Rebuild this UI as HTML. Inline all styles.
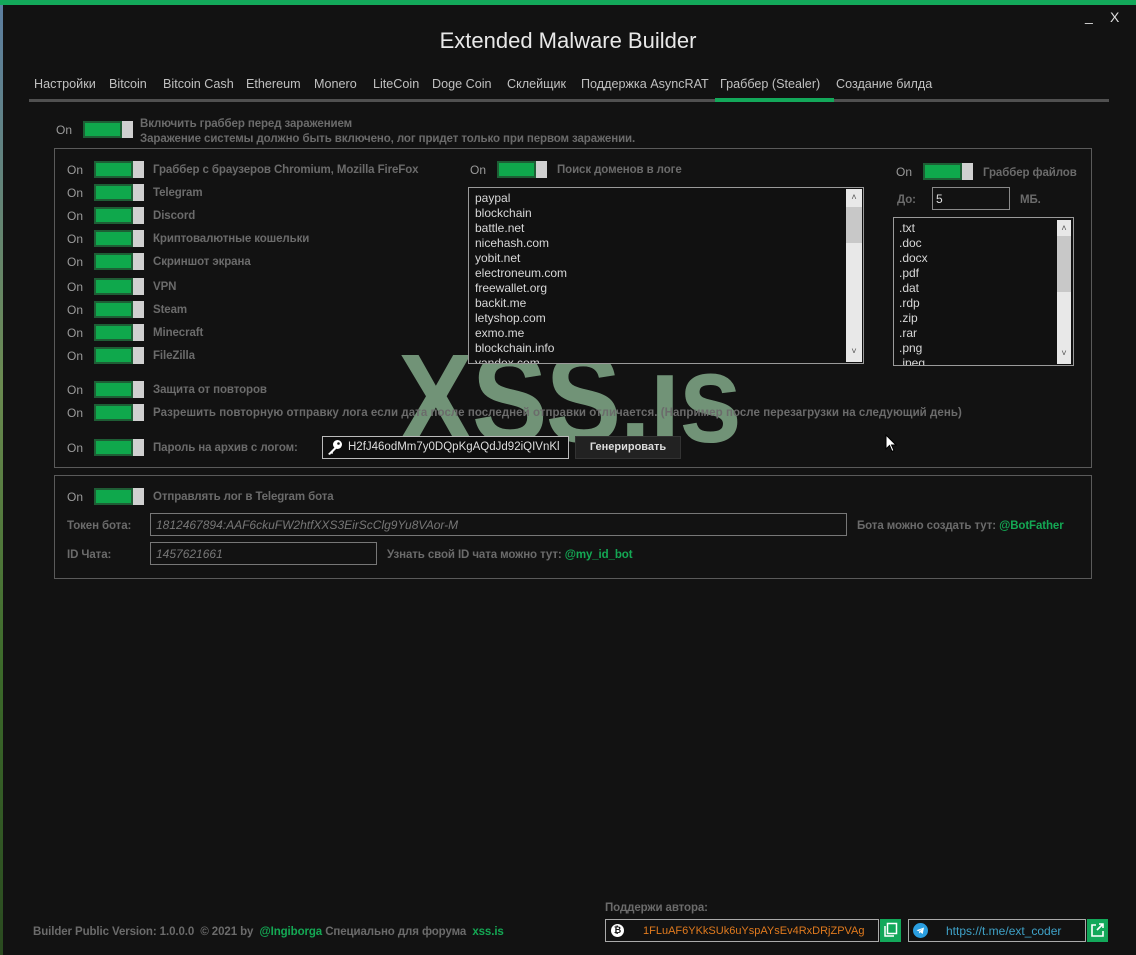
<!DOCTYPE html>
<html><head><meta charset="utf-8"><style>
*{margin:0;padding:0;box-sizing:border-box}
body{width:1136px;height:955px;background:#121212;overflow:hidden;position:relative;font-family:"Liberation Sans",sans-serif;color:#6c6c6c}
.a{position:absolute;white-space:nowrap}
.on{font-size:12px;color:#9a9a9a}
.lb{font-size:11.5px;font-weight:bold;color:#6b6b6b;letter-spacing:-0.1px;margin-top:2px}
.tg{position:absolute;width:50px;height:17px;background:#d0d0d0}
.tg:before{content:"";position:absolute;left:0;top:0;width:39px;height:17px;background:#0fa84c;border:2px solid #1e5e35;box-sizing:border-box}
.box{position:absolute;border:1px solid #5a5a5a}
.list{position:absolute;border:1px solid #9a9a9a;background:#111;overflow:hidden;font-size:12px;color:#d8d8d8;line-height:15px}
.sb{position:absolute;right:1px;top:1px;bottom:1px;width:16px;background:#e8e8e8}
.tab{font-size:12.6px;color:#c0c0c0;top:77px}
</style></head><body>
<div class="a" style="left:0;top:0;width:1136px;height:5px;background:#13a85a"></div>
<div class="a" style="left:0;top:5px;width:3px;height:950px;background:linear-gradient(#5c7ea0,#6a8a50 40%,#3c6a2a 70%,#2a4a20)"></div>
<div class="a" style="left:0;top:28px;width:1136px;text-align:center;font-size:22px;color:#e8e8e8">Extended Malware Builder</div>
<div class="a" style="left:1085px;top:8px;font-size:14px;color:#ddd">_</div>
<div class="a" style="left:1110px;top:9px;font-size:14px;color:#ddd">X</div>
<div class="a tab" style="left:34px">Настройки</div>
<div class="a tab" style="left:109px">Bitcoin</div>
<div class="a tab" style="left:163px">Bitcoin Cash</div>
<div class="a tab" style="left:246px">Ethereum</div>
<div class="a tab" style="left:314px">Monero</div>
<div class="a tab" style="left:373px">LiteCoin</div>
<div class="a tab" style="left:432px">Doge Coin</div>
<div class="a tab" style="left:507px">Склейщик</div>
<div class="a tab" style="left:581px">Поддержка AsyncRAT</div>
<div class="a tab" style="left:720px">Граббер (Stealer)</div>
<div class="a tab" style="left:836px">Создание билда</div>
<div class="a" style="left:29px;top:99px;width:1080px;height:3px;background:#505050"></div>
<div class="a" style="left:715px;top:98px;width:119px;height:4px;background:#13a85a"></div>

<div class="a on" style="left:56px;top:123px">On</div>
<div class="tg" style="left:83px;top:121px"></div>
<div class="a lb" style="left:140px;top:116px">Включить граббер перед заражением</div>
<div class="a lb" style="left:140px;top:131px">Заражение системы должно быть включено, лог придет только при первом заражении.</div>

<div class="box" style="left:54px;top:148px;width:1038px;height:320px"></div>
<div class="box" style="left:54px;top:475px;width:1038px;height:104px"></div>

<div class="a" style="left:398px;top:326px;font-size:126px;font-weight:bold;color:rgba(130,170,138,0.85);transform:scaleX(0.9);transform-origin:left top;letter-spacing:-2px">XSS.is</div>

<div class="a on" style="left:67px;top:163px">On</div><div class="tg" style="left:94px;top:161px"></div><div class="a lb" style="left:153px;top:162px">Граббер с браузеров Chromium, Mozilla FireFox</div>
<div class="a on" style="left:67px;top:186px">On</div><div class="tg" style="left:94px;top:184px"></div><div class="a lb" style="left:153px;top:185px">Telegram</div>
<div class="a on" style="left:67px;top:209px">On</div><div class="tg" style="left:94px;top:207px"></div><div class="a lb" style="left:153px;top:208px">Discord</div>
<div class="a on" style="left:67px;top:232px">On</div><div class="tg" style="left:94px;top:230px"></div><div class="a lb" style="left:153px;top:231px">Криптовалютные кошельки</div>
<div class="a on" style="left:67px;top:255px">On</div><div class="tg" style="left:94px;top:253px"></div><div class="a lb" style="left:153px;top:254px">Скриншот экрана</div>
<div class="a on" style="left:67px;top:280px">On</div><div class="tg" style="left:94px;top:278px"></div><div class="a lb" style="left:153px;top:279px">VPN</div>
<div class="a on" style="left:67px;top:303px">On</div><div class="tg" style="left:94px;top:301px"></div><div class="a lb" style="left:153px;top:302px">Steam</div>
<div class="a on" style="left:67px;top:326px">On</div><div class="tg" style="left:94px;top:324px"></div><div class="a lb" style="left:153px;top:325px">Minecraft</div>
<div class="a on" style="left:67px;top:349px">On</div><div class="tg" style="left:94px;top:347px"></div><div class="a lb" style="left:153px;top:348px">FileZilla</div>
<div class="a on" style="left:67px;top:383px">On</div><div class="tg" style="left:94px;top:381px"></div><div class="a lb" style="left:153px;top:382px">Защита от повторов</div>
<div class="a on" style="left:67px;top:406px">On</div><div class="tg" style="left:94px;top:404px"></div><div class="a lb" style="left:153px;top:405px;letter-spacing:0.05px">Разрешить повторную отправку лога если дата после последней отправки отличается. (Например после перезагрузки на следующий день)</div>
<div class="a on" style="left:67px;top:441px">On</div><div class="tg" style="left:94px;top:439px"></div><div class="a lb" style="left:153px;top:440px">Пароль на архив с логом:</div>
<div class="a" style="left:322px;top:436px;width:247px;height:23px;border:1px solid #bbb;background:#0e0e0e;font-size:11.5px;color:#ddd;padding:4px 0 0 25px;overflow:hidden">H2fJ46odMm7y0DQpKgAQdJd92iQIVnKl</div>
<svg class="a" style="left:326px;top:439px" width="18" height="17" viewBox="0 0 18 17"><circle cx="11.5" cy="5.5" r="4.5" fill="#fff"/><circle cx="12.5" cy="4.5" r="1.3" fill="#111"/><path d="M9 8 L2 15 L4 16 L5 14.5 L6.5 15 L7 13 L10.5 9.5Z" fill="#fff"/></svg>
<div class="a" style="left:575px;top:436px;width:106px;height:23px;background:#222;border:1px solid #333;font-size:11px;font-weight:bold;color:#ddd;text-align:center;line-height:21px">Генерировать</div>

<div class="a on" style="left:470px;top:163px">On</div><div class="tg" style="left:497px;top:161px"></div><div class="a lb" style="left:557px;top:162px">Поиск доменов в логе</div>
<div class="list" style="left:468px;top:187px;width:396px;height:177px;padding:3px 0 0 6px">paypal<br>blockchain<br>battle.net<br>nicehash.com<br>yobit.net<br>electroneum.com<br>freewallet.org<br>backit.me<br>letyshop.com<br>exmo.me<br>blockchain.info<br>yandex.com<div class="sb"><div style="position:absolute;top:18px;left:0;width:16px;height:36px;background:#c8c8c8"></div><div style="position:absolute;top:1px;width:16px;text-align:center;font-size:9px;color:#555">˄</div><div style="position:absolute;bottom:3px;width:16px;text-align:center;font-size:9px;color:#555">˅</div></div></div>

<div class="a on" style="left:896px;top:165px">On</div><div class="tg" style="left:923px;top:163px"></div><div class="a lb" style="left:983px;top:165px">Граббер файлов</div>
<div class="a lb" style="left:897px;top:192px">До:</div>
<div class="a" style="left:932px;top:187px;width:78px;height:23px;border:1px solid #8a8a8a;font-size:12px;color:#ddd;padding:4px 0 0 3px">5</div>
<div class="a lb" style="left:1020px;top:192px">МБ.</div>
<div class="list" style="left:893px;top:217px;width:181px;height:149px;padding:3px 0 0 5px">.txt<br>.doc<br>.docx<br>.pdf<br>.dat<br>.rdp<br>.zip<br>.rar<br>.png<br>.jpeg<div class="sb" style="right:2px;top:2px;width:14px"><div style="position:absolute;top:16px;left:0;width:14px;height:56px;background:#c8c8c8"></div><div style="position:absolute;top:1px;width:14px;text-align:center;font-size:9px;color:#555">˄</div><div style="position:absolute;bottom:3px;width:14px;text-align:center;font-size:9px;color:#555">˅</div></div></div>

<svg class="a" style="left:885px;top:434px" width="12" height="19" viewBox="0 0 12 19"><path d="M1 1 L1 15 L4.5 11.5 L7 17.5 L9 16.5 L6.5 11 L11 11Z" fill="#fff" stroke="#000" stroke-width="1"/></svg>

<div class="a on" style="left:67px;top:490px">On</div><div class="tg" style="left:94px;top:488px"></div><div class="a lb" style="left:153px;top:489px">Отправлять лог в Telegram бота</div>
<div class="a lb" style="left:67px;top:518px">Токен бота:</div>
<div class="a" style="left:150px;top:513px;width:697px;height:23px;border:1px solid #777;font-size:12px;font-style:italic;color:#777;padding:4px 0 0 5px">1812467894:AAF6ckuFW2htfXXS3EirScClg9Yu8VAor-M</div>
<div class="a lb" style="left:857px;top:518px">Бота можно создать тут: <span style="color:#14a854">@BotFather</span></div>
<div class="a lb" style="left:67px;top:547px">ID Чата:</div>
<div class="a" style="left:150px;top:542px;width:227px;height:23px;border:1px solid #777;font-size:12px;font-style:italic;color:#777;padding:4px 0 0 5px">1457621661</div>
<div class="a lb" style="left:387px;top:547px">Узнать свой ID чата можно тут: <span style="color:#14a854">@my_id_bot</span></div>

<div class="a lb" style="left:33px;top:924px">Builder Public Version: 1.0.0.0 &nbsp;© 2021 by &nbsp;<span style="color:#14a854">@Ingiborga</span> Специально для форума &nbsp;<span style="color:#14a854">xss.is</span></div>
<div class="a lb" style="left:605px;top:900px">Поддержи автора:</div>
<div class="a" style="left:605px;top:919px;width:274px;height:23px;border:1px solid #aaa;font-size:11px;color:#e07a1e;padding:5px 0 0 37px;overflow:hidden">1FLuAF6YKkSUk6uYspAYsEv4RxDRjZPVAg</div>
<div class="a" style="left:611px;top:924px;width:13px;height:13px;border-radius:50%;background:#fff;font-size:9px;color:#111;text-align:center;line-height:13px;font-weight:bold">₿</div>
<div class="a" style="left:880px;top:919px;width:21px;height:23px;background:#13a85a"></div>
<svg class="a" style="left:883px;top:922px" width="15" height="16" viewBox="0 0 15 16"><rect x="4.5" y="1.5" width="9" height="10" fill="none" stroke="#fff" stroke-width="1.5"/><path d="M2 4 V14 H11" fill="none" stroke="#fff" stroke-width="1.5"/></svg>
<div class="a" style="left:908px;top:919px;width:178px;height:23px;border:1px solid #aaa;font-size:12px;color:#3fa2c8;padding:4px 0 0 37px">https://t.me/ext_coder</div>
<svg class="a" style="left:913px;top:923px" width="15" height="15" viewBox="0 0 15 15"><circle cx="7.5" cy="7.5" r="7.5" fill="#2a9ee0"/><path d="M3.5 7.3 L11 4.5 L9.7 11 L7.3 9.3 L6 10.5 L6 8.6 L10 5.4 L5.5 8.2Z" fill="#fff"/></svg>
<div class="a" style="left:1087px;top:919px;width:21px;height:23px;background:#13a85a"></div>
<svg class="a" style="left:1090px;top:922px" width="15" height="16" viewBox="0 0 15 16"><path d="M6 3 H2 V14 H13 V9" fill="none" stroke="#fff" stroke-width="1.6"/><path d="M7 8 L13 2 M9 2 H13 V6" fill="none" stroke="#fff" stroke-width="1.6"/></svg>
</body></html>
